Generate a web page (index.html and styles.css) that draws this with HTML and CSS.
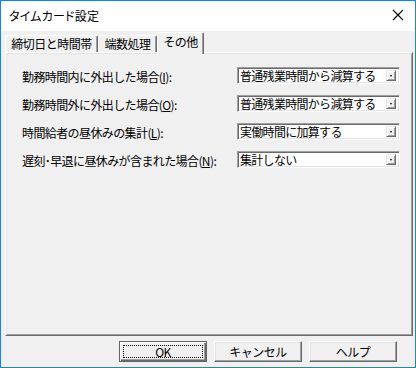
FILE: index.html
```html
<!DOCTYPE html>
<html lang="ja">
<head>
<meta charset="utf-8">
<title>タイムカード設定</title>
<link rel="stylesheet" href="styles.css">
</head>
<body>
<div class="window">
  <div class="titlebar">
    <span class="title">タイムカード設定</span>
    <svg class="close" width="12" height="12" viewBox="0 0 12 12"><path d="M1 1 L11 11 M11 1 L1 11" stroke="#000" stroke-width="1.1" fill="none"/></svg>
  </div>
  <div class="client">
    <div class="tabs">
      <div class="tab t1">締切日と時間帯</div>
      <div class="tab t2">端数処理</div>
      <div class="tab t3 active">その他</div>
    </div>
    <div class="panel">
      <div class="form">
        <div class="label">勤務時間内に外出した場合(<u>I</u>):</div>
        <div class="combo"><span class="value">普通残業時間から減算する</span><span class="drop"><i></i></span></div>
        <div class="label">勤務時間外に外出した場合(<u>O</u>):</div>
        <div class="combo"><span class="value">普通残業時間から減算する</span><span class="drop"><i></i></span></div>
        <div class="label">時間給者の昼休みの集計(<u>L</u>):</div>
        <div class="combo"><span class="value">実働時間に加算する</span><span class="drop"><i></i></span></div>
        <div class="label">遅刻･早退に昼休みが含まれた場合(<u>N</u>):</div>
        <div class="combo"><span class="value">集計しない</span><span class="drop"><i></i></span></div>
      </div>
    </div>
    <div class="buttons">
      <div class="btn default"><span class="focus">OK</span></div>
      <div class="btn">キャンセル</div>
      <div class="btn">ヘルプ</div>
    </div>
  </div>
</div>
</body>
</html>
```
FILE: styles.css
```css
html, body {
  margin: 0;
  padding: 0;
  background: #f0f0f0;
}
body {
  font-family: "Noto Sans CJK JP", "Noto Sans", sans-serif;
  font-size: 12px;
  color: #000;
}
.window {
  box-sizing: border-box;
  width: 416px;
  height: 368px;
  border: 1px solid #1a85d8;
  background: #f0f0f0;
  display: flex;
  flex-direction: column;
}
.titlebar {
  height: 30px;
  background: #fff;
  display: flex;
  align-items: center;
  justify-content: space-between;
  padding: 0 11px 0 8px;
  box-sizing: border-box;
}
.title {
  font-size: 12px;
  line-height: 14px;
  font-feature-settings: "palt";
  letter-spacing: 0.2px;
}
.close {
  display: block;
  margin-top: -2px;
}
.client {
  flex: 1;
  display: flex;
  flex-direction: column;
}
.tabs {
  display: flex;
  align-items: flex-end;
  height: 21px;
  padding-left: 4px;
}
.tab {
  box-sizing: border-box;
  height: 17px;
  border-top: 1px solid #fff;
  border-left: 1px solid #fff;
  border-right: 1px solid #696969;
  box-shadow: inset -1px 0 0 #a0a0a0;
  border-radius: 2px 2px 0 0;
  text-align: center;
  line-height: 15px;
  font-size: 12px;
  letter-spacing: -0.5px;
  white-space: nowrap;
}
.t1 { width: 93px; }
.t2 { width: 59px; }
.t3 { width: 47px; }
.tab.active {
  height: 22px;
  margin-bottom: -2px;
  position: relative;
  z-index: 1;
  background: #f0f0f0;
  line-height: 18px;
  padding-bottom: 2px;
}
.panel {
  box-sizing: border-box;
  width: 408px;
  height: 284px;
  margin-left: 4px;
  border-top: 1px solid #fff;
  border-left: 1px solid #fff;
  border-right: 1px solid #696969;
  border-bottom: 1px solid #696969;
  box-shadow: inset 1px 1px 0 #e3e3e3, inset -1px -1px 0 #a0a0a0;
  padding: 14px 0 0 16px;
}
.form {
  display: grid;
  grid-template-columns: 215px 163px;
  grid-auto-rows: 17px;
  row-gap: 11px;
  align-items: center;
}
.label {
  font-size: 12px;
  line-height: 17px;
  letter-spacing: -0.6px;
  white-space: nowrap;
  padding-top: 1px;
}
.label u {
  text-decoration: underline;
  text-underline-offset: 1px;
}
.combo {
  box-sizing: border-box;
  height: 17px;
  background: #fff;
  border-top: 1px solid #a0a0a0;
  border-left: 1px solid #a0a0a0;
  border-right: 1px solid #fff;
  border-bottom: 1px solid #fff;
  box-shadow: inset 1px 1px 0 #696969, inset -1px -1px 0 #e3e3e3;
  display: flex;
  align-items: center;
  justify-content: space-between;
  padding: 0 2px 0 2px;
}
.value {
  font-size: 12px;
  line-height: 14px;
  letter-spacing: -0.7px;
  white-space: nowrap;
}
.drop {
  box-sizing: border-box;
  width: 10px;
  height: 11px;
  background: #f0f0f0;
  border-top: 1px solid #e3e3e3;
  border-left: 1px solid #e3e3e3;
  border-right: 1px solid #696969;
  border-bottom: 1px solid #696969;
  box-shadow: inset 1px 1px 0 #fff, inset -1px -1px 0 #a0a0a0;
  display: flex;
  align-items: center;
  justify-content: center;
  margin-right: 1px;
}
.drop i {
  display: block;
  width: 0;
  height: 0;
  border-left: 1.5px solid transparent;
  border-right: 1.5px solid transparent;
  border-top: 2px solid #000;
  margin-top: 1px;
  margin-right: 1px;
}
.buttons {
  display: flex;
  justify-content: flex-end;
  gap: 7px;
  padding-right: 18px;
  margin-top: 5px;
}
.btn {
  box-sizing: border-box;
  width: 88px;
  height: 21px;
  background: #f0f0f0;
  border-top: 1px solid #fff;
  border-left: 1px solid #fff;
  border-right: 1px solid #696969;
  border-bottom: 1px solid #696969;
  box-shadow: inset -1px -1px 0 #a0a0a0, inset 1px 1px 0 #e3e3e3;
  display: flex;
  align-items: center;
  justify-content: center;
  font-size: 12px;
  line-height: 14px;
  letter-spacing: -0.5px;
}
.btn.default {
  border: 1px solid #646464;
  box-shadow: inset 1px 1px 0 #fff, inset -1px -1px 0 #696969, inset -2px -2px 0 #a0a0a0;
  padding: 3px;
}
.focus {
  box-sizing: border-box;
  width: 100%;
  height: 100%;
  border: 1px dotted #000;
  display: flex;
  align-items: center;
  justify-content: center;
}
```
